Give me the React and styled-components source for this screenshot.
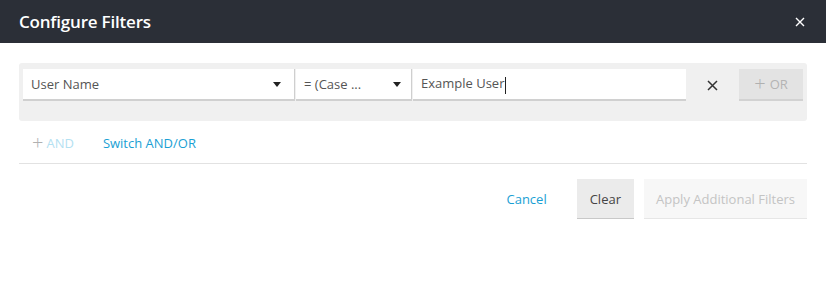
import React from 'react';
import styled, { createGlobalStyle } from 'styled-components';

const GlobalStyle = createGlobalStyle`
  body {
    margin: 0;
    font-family: "Open Sans", "Noto Sans", sans-serif;
    background: #fff;
  }
`;

const Header = styled.div`
  height: 43px;
  background: #2b2f37;
  display: flex;
  align-items: center;
  justify-content: space-between;
  padding: 0 21px 0 19px;
  box-sizing: border-box;
`;

const Title = styled.h1`
  margin: 0;
  color: #fff;
  font-size: 17px;
  font-weight: 600;
  letter-spacing: -0.2px;
`;

const CloseButton = styled.button`
  background: none;
  border: 0;
  padding: 0;
  color: #fff;
  display: flex;
  cursor: pointer;
`;

const Body = styled.div`
  padding: 20px 19px 0;
`;

const FilterPanel = styled.div`
  background: #f0f0f0;
  border-radius: 3px;
  padding: 6px 4px 20px 4px;
`;

const FilterRow = styled.div`
  display: flex;
  align-items: center;
`;

const Field = styled.div`
  width: ${p => p.width}px;
  height: 32px;
  box-sizing: border-box;
  background: #fff;
  border-bottom: 2px solid #d0d0d0;
  border-right: ${p => (p.divider ? '1px solid #cfcfcf' : '0')};
  margin-right: ${p => (p.divider ? '1px' : '0')};
  display: flex;
  align-items: center;
  justify-content: space-between;
  padding: 0 ${p => p.padRight || 13}px 0 8px;
  font-size: 13px;
  color: #555;
`;

const Caret = styled.span`
  width: 0;
  height: 0;
  border-left: 4px solid transparent;
  border-right: 4px solid transparent;
  border-top: 5px solid #222;
`;

const Cursor = styled.span`
  display: inline-block;
  width: 1px;
  height: 17px;
  background: #222;
  vertical-align: middle;
  margin-left: 1px;
`;

const RemoveButton = styled.button`
  width: 53px;
  background: none;
  border: 0;
  padding: 0;
  display: flex;
  justify-content: center;
  color: #333;
`;

const OrButton = styled.button`
  width: 64px;
  height: 32px;
  box-sizing: border-box;
  background: #e3e3e3;
  border: 0;
  border-bottom: 2px solid #d2d2d2;
  color: #b4b4b4;
  font-family: inherit;
  font-size: 13px;
  display: flex;
  align-items: center;
  justify-content: center;
  gap: 4px;
`;

const Plus = styled.span`
  font-size: 20px;
  line-height: 1;
  font-weight: 300;
  color: ${p => p.color || '#b0b0b0'};
`;

const LinkRow = styled.div`
  display: flex;
  align-items: center;
  height: 43px;
  padding: 1px 0 0 13px;
  box-sizing: border-box;
  border-bottom: 1px solid #e2e2e2;
  gap: 29px;
`;

const TextLink = styled.span`
  font-size: 13px;
  color: ${p => (p.disabled ? '#b3e1f2' : '#1a9fd4')};
  display: flex;
  align-items: center;
  gap: 3px;
`;

const Footer = styled.div`
  display: flex;
  justify-content: flex-end;
  align-items: center;
  padding-top: 15px;
  gap: 10px;
`;

const CancelLink = styled.span`
  font-size: 13px;
  color: #1a9fd4;
  margin-right: 20px;
`;

const Button = styled.button`
  height: 40px;
  box-sizing: border-box;
  border: 0;
  border-bottom: 1px solid ${p => (p.disabled ? '#e6e6e6' : '#c8c8c8')};
  background: ${p => (p.disabled ? '#f7f7f7' : '#ebebeb')};
  color: ${p => (p.disabled ? '#c4c4c4' : '#444')};
  font-family: inherit;
  font-size: 13px;
  padding: 0 ${p => p.pad}px;
`;

export default function App() {
  return (
    <>
      <GlobalStyle />
      <Header>
        <Title>Configure Filters</Title>
        <CloseButton>
          <svg width="10" height="10" viewBox="0 0 10 10">
            <path d="M1 1L9 9M9 1L1 9" stroke="#fff" strokeWidth="1.4" />
          </svg>
        </CloseButton>
      </Header>
      <Body>
        <FilterPanel>
          <FilterRow>
            <Field width={272} divider>
              User Name <Caret />
            </Field>
            <Field width={116} divider padRight={10}>
              = (Case ... <Caret />
            </Field>
            <Field width={273}>
              <span>Example User<Cursor /></span>
            </Field>
            <RemoveButton>
              <svg width="11" height="11" viewBox="0 0 11 11">
                <path d="M1 1L10 10M10 1L1 10" stroke="#333" strokeWidth="1.5" />
              </svg>
            </RemoveButton>
            <OrButton>
              <Plus>+</Plus> OR
            </OrButton>
          </FilterRow>
        </FilterPanel>
        <LinkRow>
          <TextLink disabled>
            <Plus>+</Plus> AND
          </TextLink>
          <TextLink>Switch AND/OR</TextLink>
        </LinkRow>
        <Footer>
          <CancelLink>Cancel</CancelLink>
          <Button pad={13}>Clear</Button>
          <Button pad={12} disabled>Apply Additional Filters</Button>
        </Footer>
      </Body>
    </>
  );
}
